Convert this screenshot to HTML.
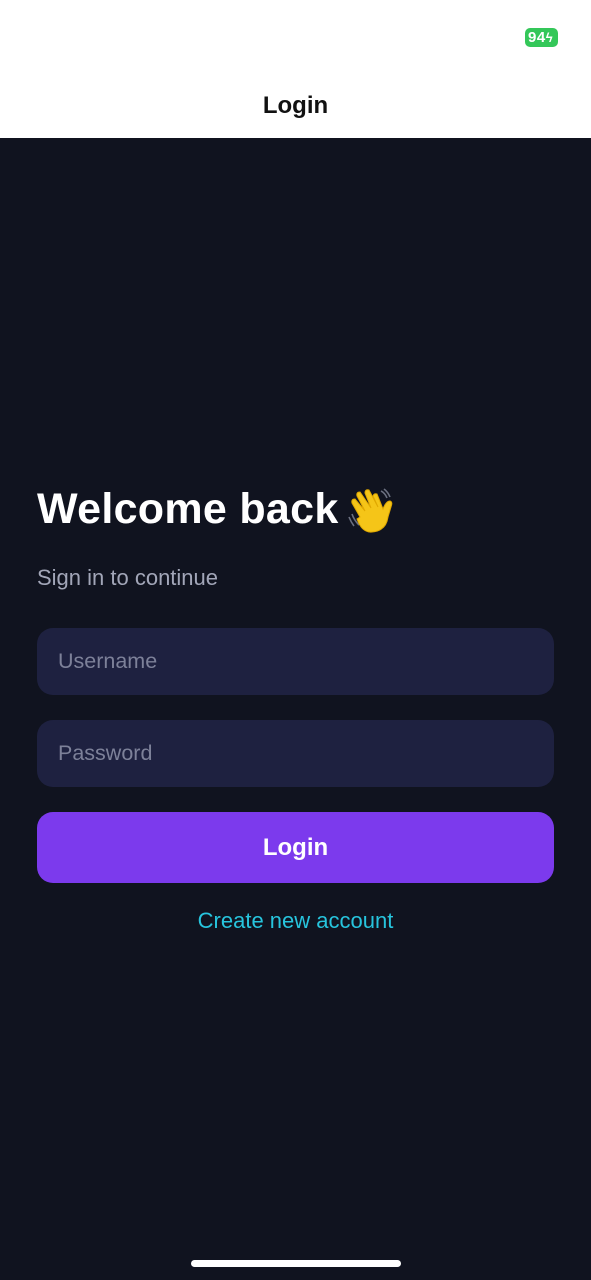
<!DOCTYPE html>
<html><head><meta charset="utf-8"><style>
*{margin:0;padding:0;box-sizing:border-box}
body{width:591px;height:1280px;background:#10131f;font-family:"Liberation Sans",sans-serif;position:relative;overflow:hidden}
.top{position:absolute;left:0;top:0;width:591px;height:138px;background:#fff}
.batt{position:absolute;left:525px;top:28px;width:33px;height:19px;background:#34c759;border-radius:5px;color:#fff;font-weight:bold;font-size:15px;line-height:19px;padding-left:3px;letter-spacing:0.5px}
.title{position:absolute;top:92px;width:591px;text-align:center;font-size:24px;font-weight:bold;color:#111}
h1{position:absolute;left:37px;top:485px;font-size:43px;font-weight:bold;color:#fff;letter-spacing:0.3px}
.hand{position:absolute;left:346px;top:487px}
.sub{position:absolute;left:37px;top:565px;font-size:22px;color:#a2a6b8}
.inp{position:absolute;left:37px;width:517px;height:67px;background:#1e2140;border-radius:16px;color:#7d8199;font-size:21.5px;padding-left:21px;line-height:67px}
.btn{position:absolute;left:37px;top:812px;width:517px;height:71px;background:#7c3aed;border-radius:16px;color:#fff;font-size:24px;font-weight:bold;text-align:center;line-height:71px}
.link{position:absolute;top:908px;width:591px;text-align:center;color:#27c4dd;font-size:22px}
.home{position:absolute;left:191px;top:1260px;width:210px;height:7px;border-radius:4px;background:#fff}
</style></head><body>
<div class="top"><div class="batt">94<span style="font-size:13px">ϟ</span></div><div class="title">Login</div></div>
<h1>Welcome back</h1>
<svg class="hand" width="48" height="46" viewBox="0 0 48 46">
<path d="M6 27q2 6 7 11M3 30q2 5 5 9M35 4q4 2 6 7M38 2q4 3 6 8" stroke="#6b7080" stroke-width="1.6" fill="none"/>
<path d="M14 30 L6 16 q-1-4 3-4 l10 12 L11 9 q-1-4 3-4 l11 16 L19 6 q0-4 4-3 l9 17 L27 9 q1-3 4-2 l6 15 q3-8 7-8 q3 1 1 6 l-3 10 q-2 14-16 15 q-10 1-15-13z" fill="#f5c518" stroke="#e0a800" stroke-width="1"/>
</svg>
<div class="sub">Sign in to continue</div>
<div class="inp" style="top:628px">Username</div>
<div class="inp" style="top:720px">Password</div>
<div class="btn">Login</div>
<div class="link">Create new account</div>
<div class="home"></div>
</body></html>
